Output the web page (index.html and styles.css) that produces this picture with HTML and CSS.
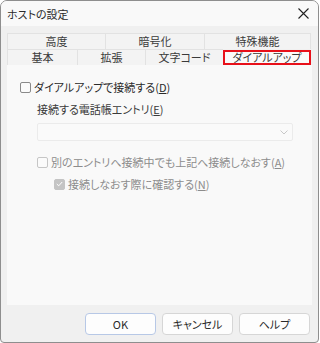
FILE: index.html
```html
<!DOCTYPE html>
<html lang="ja">
<head>
    <meta charset="UTF-8">
    <title>ホストの設定</title>
    <link rel="stylesheet" href="styles.css">
</head>
<body>
    <div class="window">
        <div class="titlebar">
            <span class="title">ホストの設定</span>
            <svg class="close" width="11" height="11" viewBox="0 0 11 11">
                <path d="M0.5 0.5 L10.5 10.5 M10.5 0.5 L0.5 10.5" stroke="#222" stroke-width="1.1" fill="none"/>
            </svg>
        </div>
        <div class="content">
            <div class="tab-row back">
                <div class="tab w98">高度</div>
                <div class="tab w99">暗号化</div>
                <div class="tab w107">特殊機能</div>
            </div>
            <div class="tab-row front">
                <div class="tab w70">基本</div>
                <div class="tab w68">拡張</div>
                <div class="tab w78">文字コード</div>
                <div class="tab w88 selected">ダイアルアップ</div>
            </div>
            <div class="panel">
                <label class="check">
                    <span class="box"></span>
                    <span>ダイアルアップで接続する(<u>D</u>)</span>
                </label>
                <div class="field">
                    <div class="field-label">接続する電話帳エントリ(<u>E</u>)</div>
                    <div class="combo">
                        <svg width="8" height="5" viewBox="0 0 8 5">
                            <path d="M0.5 0.5 L4 4 L7.5 0.5" stroke="#c8c8c8" fill="none"/>
                        </svg>
                    </div>
                </div>
                <label class="check disabled indent1">
                    <span class="box"></span>
                    <span>別のエントリへ接続中でも上記へ接続しなおす(<u>A</u>)</span>
                </label>
                <label class="check disabled indent2">
                    <span class="box checked">
                        <svg width="7" height="6" viewBox="0 0 7 6">
                            <path d="M0.8 3 L2.7 4.8 L6.2 1" stroke="#fff" stroke-width="1" fill="none"/>
                        </svg>
                    </span>
                    <span>接続しなおす際に確認する(<u>N</u>)</span>
                </label>
            </div>
            <div class="buttons">
                <button class="default">OK</button>
                <button>キャンセル</button>
                <button>ヘルプ</button>
            </div>
        </div>
    </div>
</body>
</html>
```
FILE: styles.css
```css
body {
    margin: 0;
    background: #ffffff;
    font-family: "Noto Sans CJK JP", "Noto Sans", sans-serif;
    font-size: 11px;
    font-feature-settings: "palt";
    color: #2a2a2a;
}
.window {
    width: 319px;
    height: 343px;
    box-sizing: border-box;
    border: 1px solid #8e8e8e;
    border-radius: 7px 7px 4px 4px;
    background: #f0f0f0;
    overflow: hidden;
    display: flex;
    flex-direction: column;
}
.titlebar {
    height: 25px;
    background: #f9f9f9;
    display: flex;
    align-items: center;
    justify-content: space-between;
    padding: 0 9px 0 6px;
    flex-shrink: 0;
}
.title {
    font-size: 11px;
    color: #2a2a2a;
}
.content {
    padding: 7px 5px 0 6px;
    display: flex;
    flex-direction: column;
}
.tab-row {
    display: flex;
    height: 16px;
}
.tab {
    box-sizing: border-box;
    height: 16px;
    line-height: 15px;
    text-align: center;
    background: #f3f3f3;
    border-top: 1px solid #e2e2e2;
    border-left: 1px solid #e2e2e2;
    color: #3a3a3a;
}
.tab:last-child {
    border-right: 1px solid #e2e2e2;
}
.w98 { width: 98px; }
.w99 { width: 99px; }
.w107 { width: 107px; }
.w70 { width: 70px; }
.w68 { width: 68px; }
.w78 { width: 78px; }
.w88 { width: 88px; }
.tab.selected {
    border: 2px solid #e8101a;
    background: #fafafa;
    height: 15px;
    line-height: 11px;
    margin-top: 1px;
}
.panel {
    width: 305px;
    height: 240px;
    box-sizing: border-box;
    background: #f9f9f9;
    padding: 14px 0 0 13px;
    display: flex;
    flex-direction: column;
}
.check {
    display: flex;
    align-items: center;
    gap: 3px;
    height: 16px;
}
.box {
    width: 9px;
    height: 9px;
    border: 1px solid #8a8a8a;
    border-radius: 2px;
    background: #fbfbfb;
    display: flex;
    align-items: center;
    justify-content: center;
}
u {
    text-decoration: underline;
    text-underline-offset: 1px;
}
.field {
    padding-left: 17px;
    margin-top: 6px;
}
.field-label {
    color: #3a3a3a;
    height: 16px;
    line-height: 16px;
}
.combo {
    margin-top: 6px;
    width: 256px;
    height: 18px;
    box-sizing: border-box;
    border: 1px solid #ebebeb;
    border-radius: 2px;
    background: #fafafa;
    display: flex;
    align-items: center;
    justify-content: flex-end;
    padding-right: 4px;
}
.disabled {
    color: #8c8c8c;
}
.disabled .box {
    border-color: #c6c6c6;
}
.indent1 {
    margin-left: 17px;
    margin-top: 13px;
}
.indent2 {
    margin-left: 34px;
    margin-top: 6px;
}
.box.checked {
    background: #c4c4c4;
    border-color: #c4c4c4;
}
.buttons {
    display: flex;
    justify-content: flex-end;
    gap: 6px;
    margin-top: 8px;
    padding-right: 3px;
}
button {
    width: 71px;
    height: 22px;
    font-family: inherit;
    font-size: 11px;
    font-feature-settings: "palt";
    color: #2a2a2a;
    background: #fdfdfd;
    border: 1px solid #d6d6d6;
    border-radius: 4px;
    padding: 0;
}
button.default {
    border-color: #b7c8e6;
}
```
